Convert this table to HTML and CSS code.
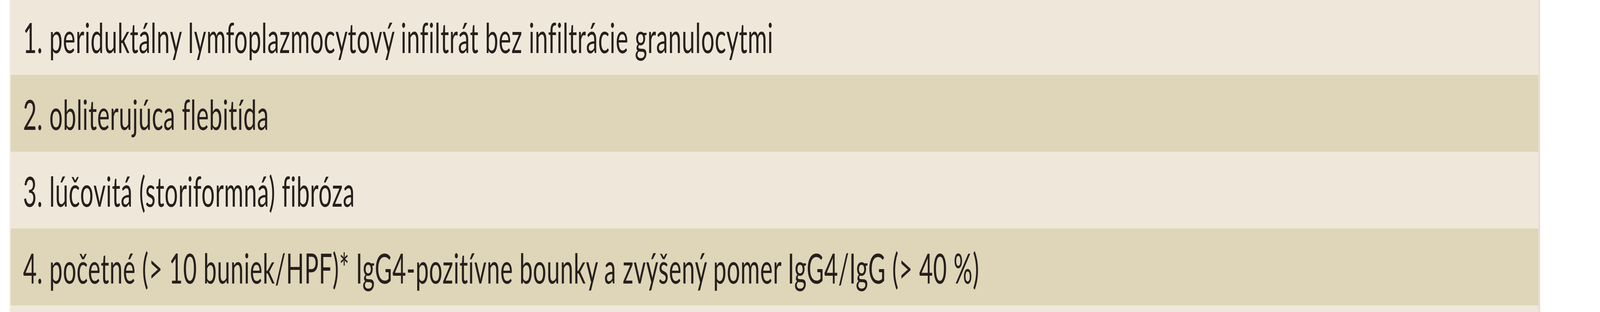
FILE: index.html
```html
<!DOCTYPE html>
<html lang="sk">
<head>
<meta charset="utf-8">
<title>Kritériá</title>
<link rel="stylesheet" href="styles.css">
</head>
<body>
<div class="table">
  <div class="row light"><span class="text">1. periduktálny lymfoplazmocytový infiltrát bez infiltrácie granulocytmi</span></div>
  <div class="row dark"><span class="text">2. obliterujúca flebitída</span></div>
  <div class="row light"><span class="text">3. lúčovitá (storiformná) fibróza</span></div>
  <div class="row dark"><span class="text">4. početné (&gt; 10 buniek/HPF)* IgG4-pozitívne bounky a zvýšený pomer IgG4/IgG (&gt; 40 %)</span></div>
  <div class="row light tail"></div>
</div>
</body>
</html>
```
FILE: styles.css
```css
html, body {
  margin: 0;
  padding: 0;
  background: #ffffff;
  height: 800px;
  overflow: hidden;
}
.table {
  margin: -5px 3.7466vw 0 0.5785vw;
  border-left: 0.0826vw solid #f4f0e6;
  border-right: 0.1377vw solid #e5e1d5;
  font-family: Lato, "Open Sans", sans-serif;
  font-size: 107px;
  letter-spacing: 1.5px;
  color: #261f1c;
}
.row {
  box-sizing: border-box;
  height: 197px;
  padding: 2px 0 0 0.7851vw;
  line-height: 195px;
  white-space: nowrap;
  overflow: hidden;
}
.text {
  display: inline-block;
  transform-origin: 0 50%;
}
.tail {
  height: 21px;
}
.light {
  background: #efe8da;
}
.dark {
  background: #dfd5b8;
}
@media (max-width: 4096px) {
  .text {
    transform: scaleX(0.5642);
  }
}
```
